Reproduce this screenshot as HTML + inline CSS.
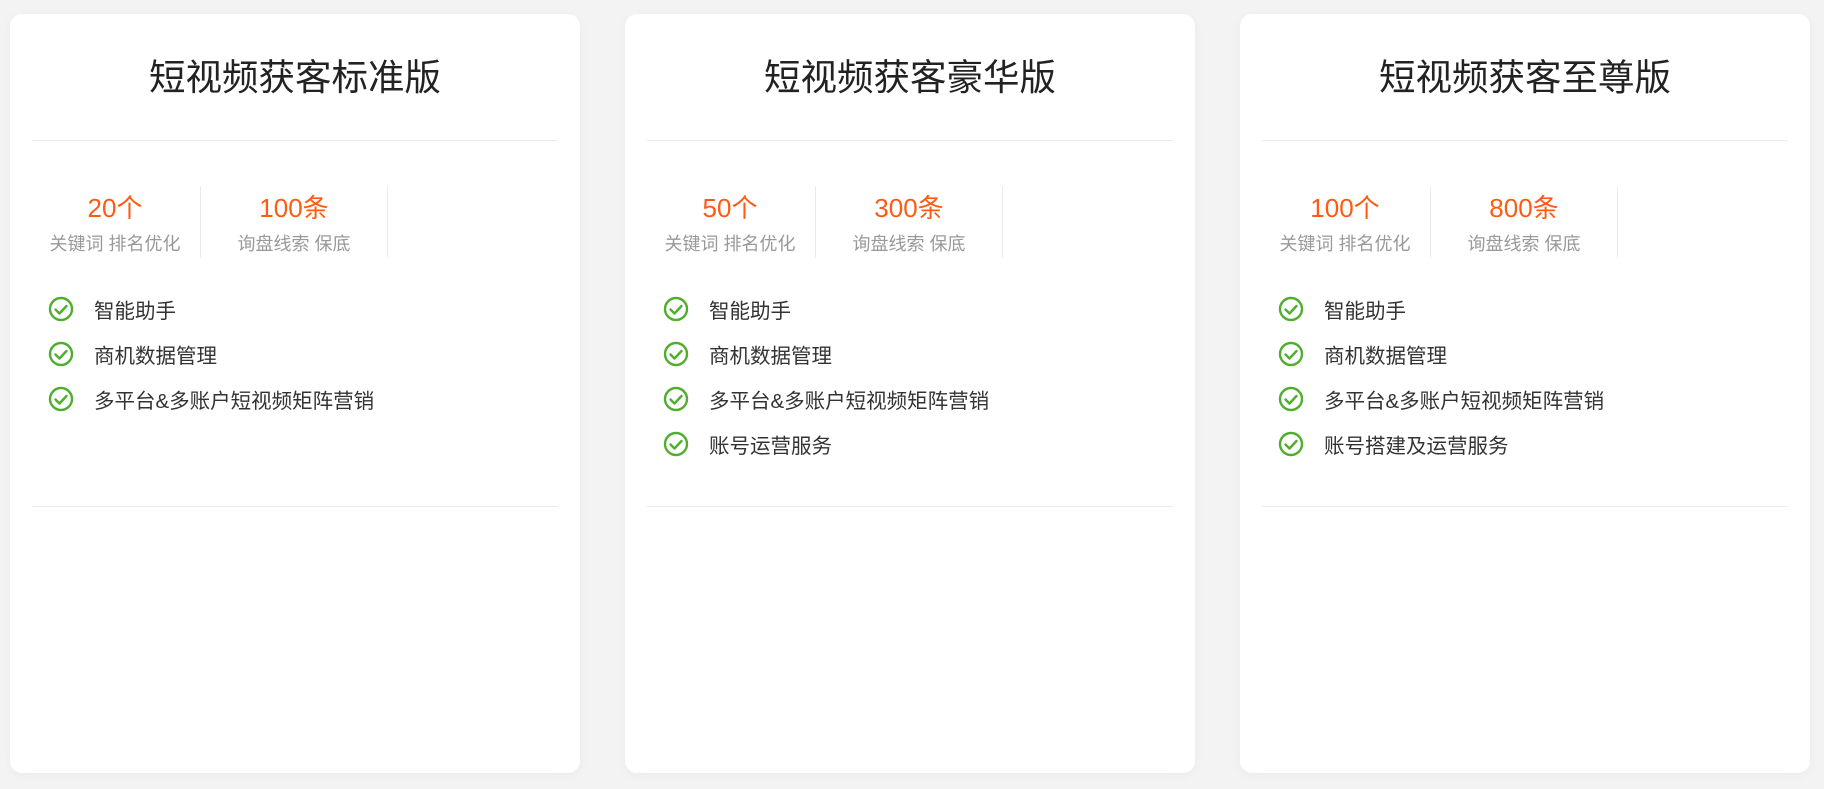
<!DOCTYPE html>
<html><head><meta charset="utf-8"><style>
*{margin:0;padding:0;box-sizing:border-box}
body{width:1824px;height:789px;background:#f3f3f3;font-family:"Liberation Sans","Noto Sans CJK SC",sans-serif;position:relative;overflow:hidden}
.card{position:absolute;top:14px;width:570px;height:759px;background:#fff;border-radius:12px;box-shadow:0 2px 10px rgba(0,0,0,.04)}
.title{position:absolute;top:38px;left:0;right:0;text-align:center;font-size:36.5px;color:#222;line-height:52px}
.hr{position:absolute;left:22px;right:22px;height:1px;background:#ececec}
.stat{position:absolute;top:172px;height:72px;text-align:center;border-right:1px solid #ececec}
.s1{left:12px;width:179px;padding-left:8px}
.s2{left:191px;width:187px}
.stat .n{font-size:26px;color:#ff5a14;line-height:36px;margin-top:4px}
.stat .l{font-size:18px;color:#999;line-height:26px;margin-top:5px}
.f{position:absolute;left:38px;height:30px;display:flex;align-items:center;font-size:20.5px;color:#333}
.f svg{margin-right:20px}
</style></head><body>
<svg width="0" height="0" style="position:absolute"><defs><g id="ck"><circle cx="13" cy="13" r="11" fill="none" stroke="#4fae2e" stroke-width="2.4"/><path d="M7.5 13.5l4 4 7-7.5" fill="none" stroke="#4fae2e" stroke-width="2.4" stroke-linecap="round" stroke-linejoin="round"/></g></defs></svg>

<div class="card" style="left:10px">
<div class="title">短视频获客标准版</div>
<div class="hr" style="top:126px"></div>
<div class="stat s1"><div class="n">20个</div><div class="l">关键词 排名优化</div></div>
<div class="stat s2"><div class="n">100条</div><div class="l">询盘线索 保底</div></div>
<div class="f" style="top:280px"><svg width="26" height="26"><use href="#ck"/></svg>智能助手</div>
<div class="f" style="top:325px"><svg width="26" height="26"><use href="#ck"/></svg>商机数据管理</div>
<div class="f" style="top:370px"><svg width="26" height="26"><use href="#ck"/></svg>多平台&amp;多账户短视频矩阵营销</div>
<div class="hr" style="top:492px"></div>
</div>

<div class="card" style="left:625px">
<div class="title">短视频获客豪华版</div>
<div class="hr" style="top:126px"></div>
<div class="stat s1"><div class="n">50个</div><div class="l">关键词 排名优化</div></div>
<div class="stat s2"><div class="n">300条</div><div class="l">询盘线索 保底</div></div>
<div class="f" style="top:280px"><svg width="26" height="26"><use href="#ck"/></svg>智能助手</div>
<div class="f" style="top:325px"><svg width="26" height="26"><use href="#ck"/></svg>商机数据管理</div>
<div class="f" style="top:370px"><svg width="26" height="26"><use href="#ck"/></svg>多平台&amp;多账户短视频矩阵营销</div>
<div class="f" style="top:415px"><svg width="26" height="26"><use href="#ck"/></svg>账号运营服务</div>
<div class="hr" style="top:492px"></div>
</div>

<div class="card" style="left:1240px">
<div class="title">短视频获客至尊版</div>
<div class="hr" style="top:126px"></div>
<div class="stat s1"><div class="n">100个</div><div class="l">关键词 排名优化</div></div>
<div class="stat s2"><div class="n">800条</div><div class="l">询盘线索 保底</div></div>
<div class="f" style="top:280px"><svg width="26" height="26"><use href="#ck"/></svg>智能助手</div>
<div class="f" style="top:325px"><svg width="26" height="26"><use href="#ck"/></svg>商机数据管理</div>
<div class="f" style="top:370px"><svg width="26" height="26"><use href="#ck"/></svg>多平台&amp;多账户短视频矩阵营销</div>
<div class="f" style="top:415px"><svg width="26" height="26"><use href="#ck"/></svg>账号搭建及运营服务</div>
<div class="hr" style="top:492px"></div>
</div>
</body></html>
